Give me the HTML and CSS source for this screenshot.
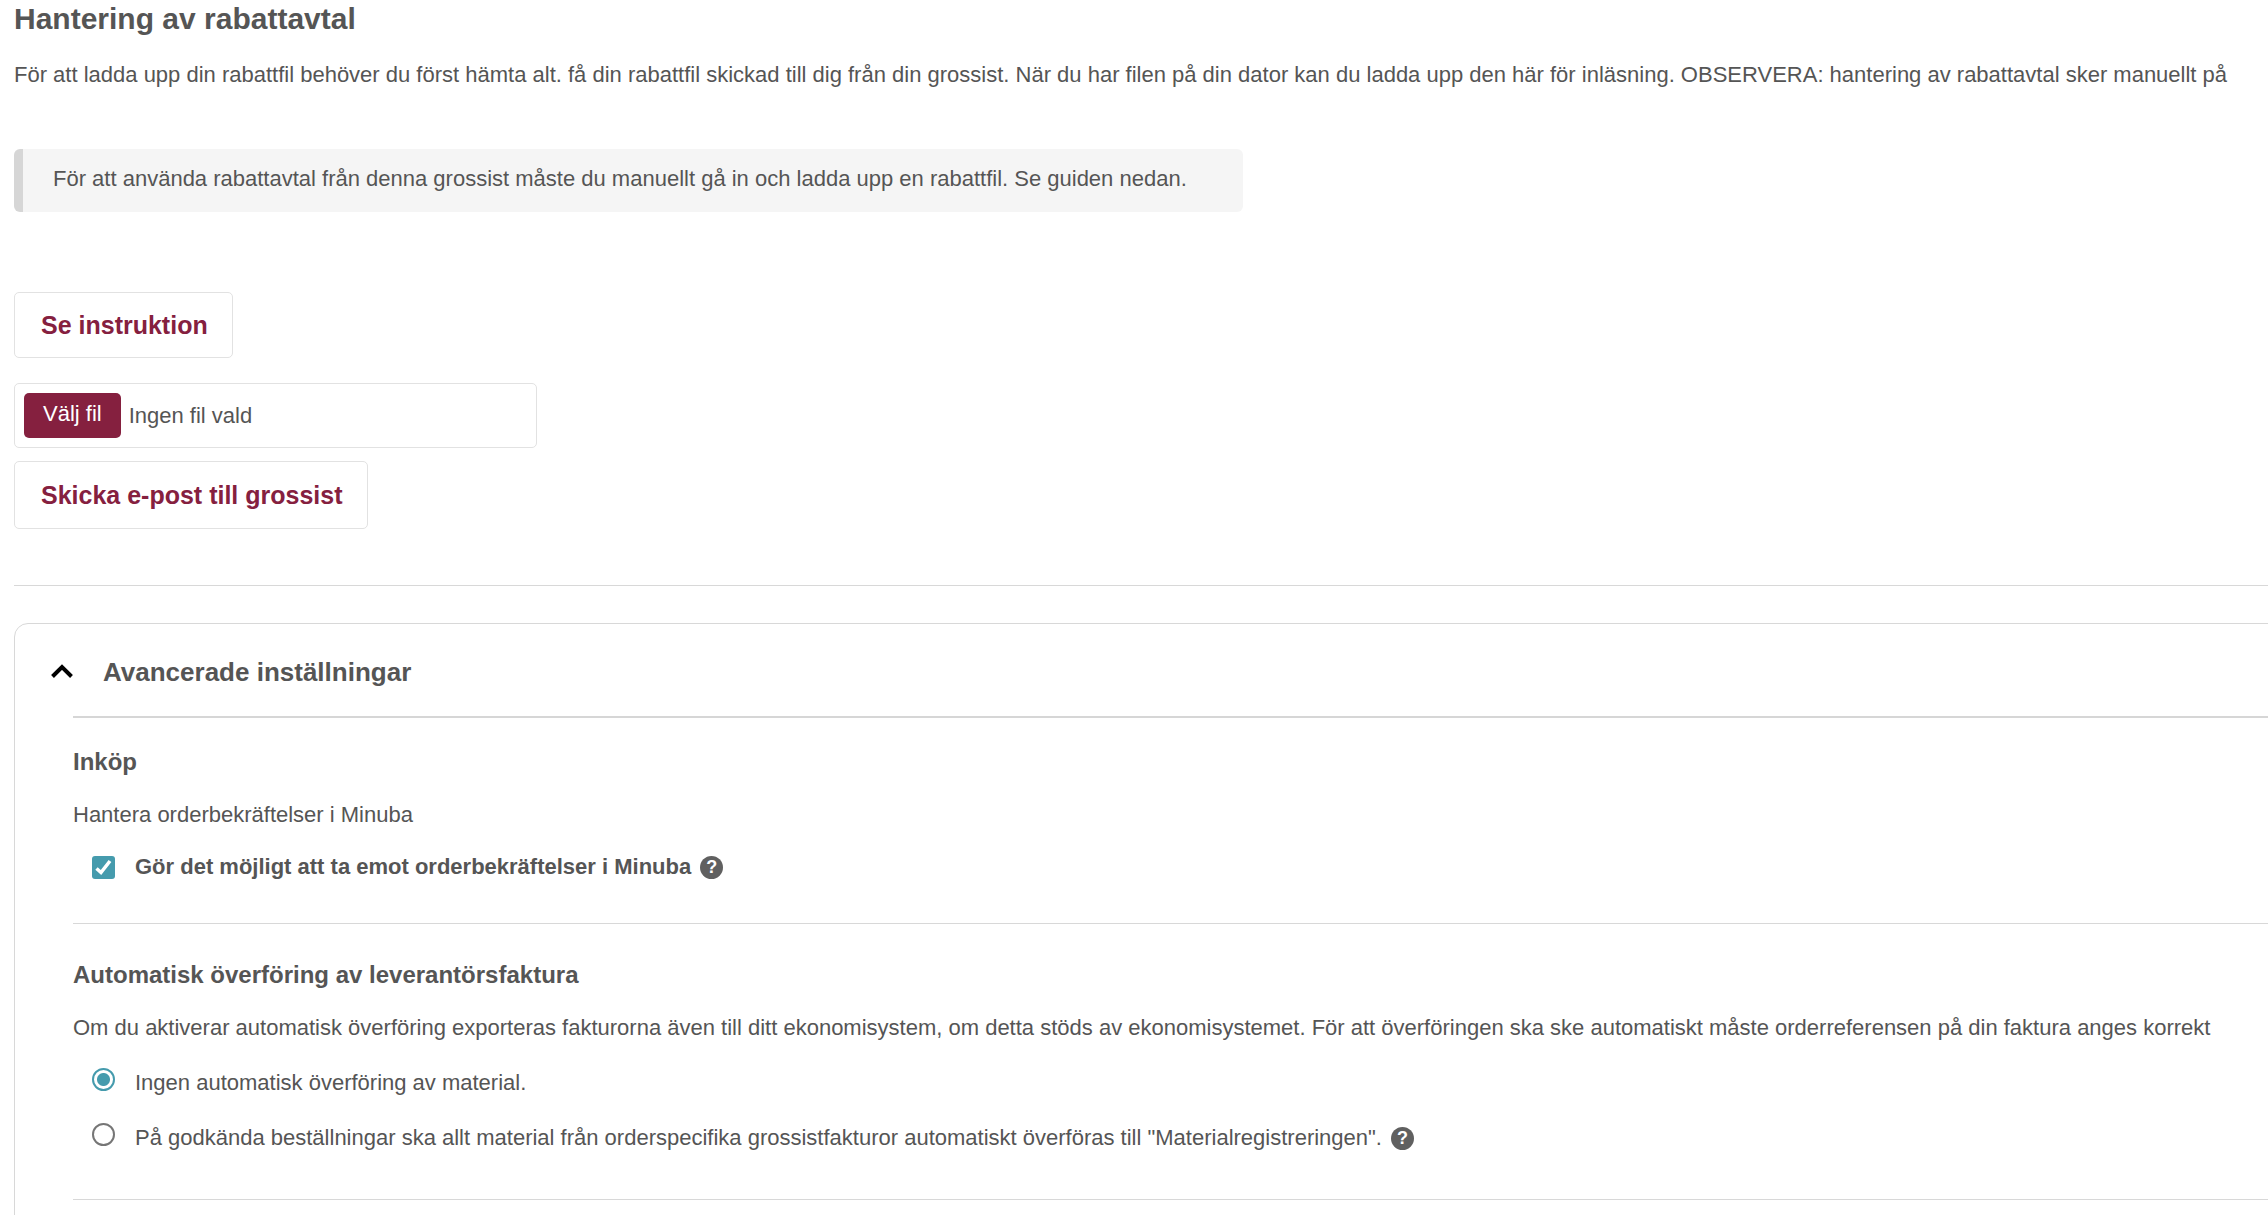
FILE: index.html
```html
<!DOCTYPE html>
<html lang="sv">
<head>
	<meta charset="UTF-8">
	<title>Hantering av rabattavtal</title>
	<link rel="stylesheet" href="styles.css">
</head>
<body>
	<main class="page">
		<h1>Hantering av rabattavtal</h1>
		<p class="intro">För att ladda upp din rabattfil behöver du först hämta alt. få din rabattfil skickad till dig från din grossist. När du har filen på din dator kan du ladda upp den här för inläsning. OBSERVERA: hantering av rabattavtal sker manuellt på</p>
		<div class="notice">För att använda rabattavtal från denna grossist måste du manuellt gå in och ladda upp en rabattfil. Se guiden nedan.</div>

		<div class="actions">
			<button type="button" class="btn">Se instruktion</button>
			<label class="file" for="rabattfil">
				<input type="file" id="rabattfil">
				<span class="file-btn">Välj fil</span>
				<span>Ingen fil vald</span>
			</label>
			<button type="button" class="btn">Skicka e-post till grossist</button>
		</div>

		<section class="card">
			<button type="button" class="card-head" aria-expanded="true">
				<svg class="chevron" viewBox="0 0 24 16"><path d="M2.500 12.500L12 3L21.500 12.500" fill="none" stroke="#000" stroke-width="4"/></svg>
				<span>Avancerade inställningar</span>
			</button>
			<div class="card-body">
				<div class="group">
					<h2>Inköp</h2>
					<p>Hantera orderbekräftelser i Minuba</p>
					<div class="option">
						<span class="check">
							<input type="checkbox" id="order" checked>
							<svg viewBox="0 0 23 23"><path d="M4.500 12.500L9 16.500L18 5" fill="none" stroke="#fff" stroke-width="3.500"/></svg>
						</span>
						<label for="order" class="strong">Gör det möjligt att ta emot orderbekräftelser i Minuba</label>
						<span class="help">?</span>
					</div>
				</div>
				<div class="group">
					<h2>Automatisk överföring av leverantörsfaktura</h2>
					<p>Om du aktiverar automatisk överföring exporteras fakturorna även till ditt ekonomisystem, om detta stöds av ekonomisystemet. För att överföringen ska ske automatiskt måste orderreferensen på din faktura anges korrekt</p>
					<div class="option radio">
						<input type="radio" name="transfer" id="none" checked>
						<label for="none">Ingen automatisk överföring av material.</label>
					</div>
					<div class="option radio">
						<input type="radio" name="transfer" id="approved">
						<label for="approved">På godkända beställningar ska allt material från orderspecifika grossistfakturor automatiskt överföras till "Materialregistreringen".</label>
						<span class="help">?</span>
					</div>
				</div>
			</div>
		</section>
	</main>
</body>
</html>
```
FILE: styles.css
```css
*{margin:0;padding:0;box-sizing:border-box;}
body{background:#fff;color:#555;font:22px/32px "Liberation Sans",Arial,sans-serif;overflow:hidden;}
button,input{font:inherit;color:inherit;}
.page{padding-left:14px;white-space:nowrap;}
h1{font-size:30px;line-height:38px;}
.intro{margin-top:21px;}
.notice{width:1229px;max-width:100%;margin-top:58px;padding:14px 30px 17px;background:#f5f5f5;border-left:9px solid #d6d6d6;border-radius:6px;}

.actions{display:flex;flex-direction:column;align-items:flex-start;padding:80px 0 56px;border-bottom:1px solid #d8d8d8;}
.btn{height:66px;padding:0 24px 0 26px;background:#fff;border:1px solid #e2e2e2;border-radius:5px;color:#85203f;font-size:25px;font-weight:bold;cursor:pointer;}
.file + .btn{height:68px;}
.file{position:relative;display:flex;align-items:center;gap:8px;width:523px;height:65px;margin:25px 0 13px;padding:0 9px;border:1px solid #e2e2e2;border-radius:5px;cursor:pointer;}
.file input{position:absolute;inset:0;opacity:0;}
.file-btn{height:45px;padding:5px 19px;background:#85203f;border-radius:5px;color:#fff;}

.card{margin:37px -20px 0 0;padding:0 0 40px 35px;border:1px solid #d8d8d8;border-radius:14px;}
.card-head{display:flex;align-items:center;gap:29px;height:92px;padding-top:3px;background:none;border:0;font-size:26px;font-weight:bold;cursor:pointer;}
.chevron{width:24px;height:16px;}
.card-body{margin-left:23px;border-top:2px solid #d6d6d6;}
.group{padding:28px 0 40px;border-bottom:1px solid #d8d8d8;}
.group + .group{padding:35px 0 45px;}
h2{font-size:24px;line-height:32px;margin-bottom:21px;}
.option{display:flex;align-items:center;margin-top:20px;padding-left:19px;}
.radio{margin-top:23px;}
.radio input{margin-bottom:8px;}
.strong{font-weight:bold;}
.check{position:relative;height:23px;}
.check svg{position:absolute;top:0;left:0;width:23px;height:23px;pointer-events:none;}
.option input{appearance:none;display:block;width:23px;height:23px;margin-right:20px;border:2px solid #767676;border-radius:50%;background:#fff;}
.option input[type=checkbox]{border:0;border-radius:3px;background:#459bad;}
.option input[type=checkbox]:not(:checked) + svg{display:none;}
.option input[type=radio]:checked{border-color:#459bad;background:radial-gradient(#459bad 0 6px,#fff 7px);}
.help{width:23px;height:23px;margin-left:9px;border-radius:50%;background:#606060;color:#fff;font-size:18px;line-height:23px;font-weight:bold;text-align:center;}
```
